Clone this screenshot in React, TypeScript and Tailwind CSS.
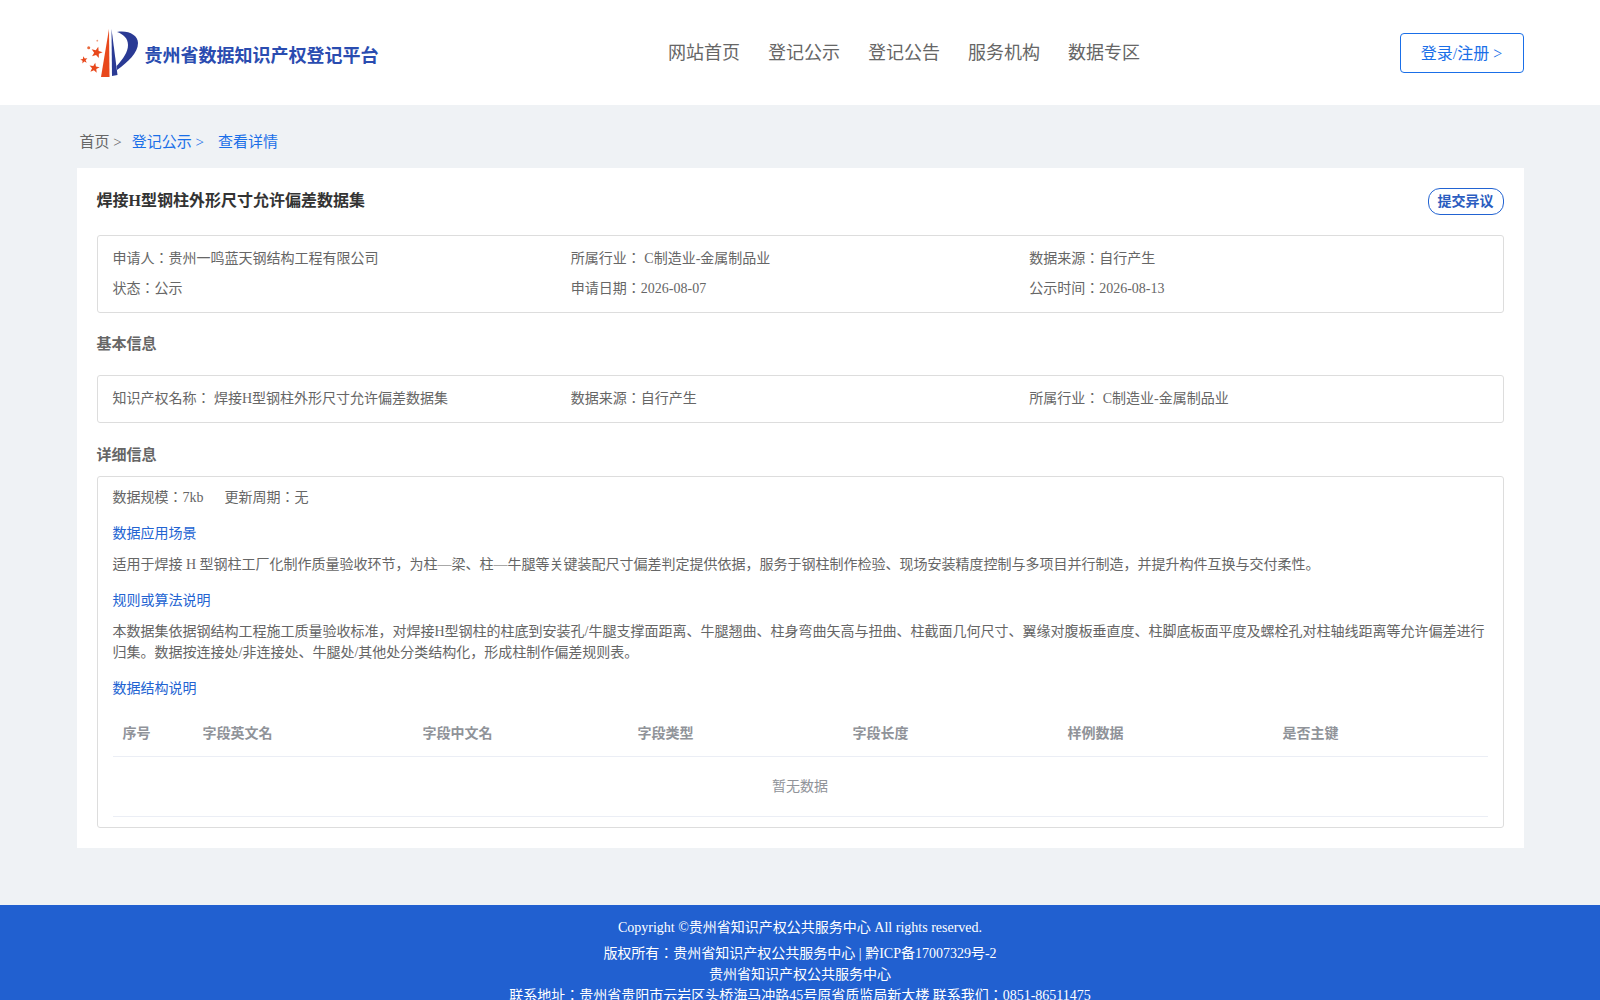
const blueLink = "text-[#1a6fe8]";

function starPoints(cx: number, cy: number, r: number, rot: number) {
  const pts: string[] = [];
  for (let i = 0; i < 10; i++) {
    const rad = i % 2 === 0 ? r : r * 0.42;
    const a = ((-90 + rot + i * 36) * Math.PI) / 180;
    pts.push(`${(cx + rad * Math.cos(a)).toFixed(2)},${(cy + rad * Math.sin(a)).toFixed(2)}`);
  }
  return pts.join(" ");
}

function Logo() {
  return (
    <svg width="62" height="54" viewBox="0 0 62 54" className="shrink-0">
      <path d="M23 51 L31 3 L31.5 51 Z" fill="#e8481c" />
      <path d="M33.5 3 L34 50 L39.5 49 Z" fill="#2a3a94" />
      <path d="M39 6 C50 4 60 9 60 17 C60 27 50 36 39 44 L38.6 40 C45 33 50 26 50 19 C50 12 45 8 39 6 Z" fill="#2a3a94" />
      <polygon points={starPoints(18.7, 26.5, 6, 15)} fill="#e8481c" />
      <polygon points={starPoints(6, 34, 3.8, -10)} fill="#e8481c" />
      <polygon points={starPoints(16.3, 42, 5.4, 10)} fill="#e8481c" />
      <circle cx="10.7" cy="21.7" r="1.5" fill="#e8693c" />
      <circle cx="19.3" cy="14.7" r="0.9" fill="#ee9a7c" />
    </svg>
  );
}

function Header() {
  return (
    <header className="h-[105px] bg-white flex justify-center">
      <div className="w-[1447px] flex items-start justify-between">
        <div className="flex items-center pl-[1px] pt-[26px]">
          <Logo />
          <span className="ml-[5px] mt-[6px] text-[18px] leading-[24px] font-bold text-[#2a4cb0]">贵州省数据知识产权登记平台</span>
        </div>
        <nav className="flex gap-[28px] pt-[40px] ml-[30px] text-[18px] leading-[26px] text-[#666666]">
          <span>网站首页</span>
          <span>登记公示</span>
          <span>登记公告</span>
          <span>服务机构</span>
          <span>数据专区</span>
        </nav>
        <div className="pt-[33px]">
          <div className={`w-[124px] h-[40px] rounded-[4px] border border-[#1a6fe8] flex items-center justify-center text-[16px] ${blueLink}`}>登录/注册 &gt;</div>
        </div>
      </div>
    </header>
  );
}

function InfoRow({ items }: { items: string[] }) {
  return (
    <div className="grid grid-cols-3">
      {items.map((t) => (
        <div key={t}>{t}</div>
      ))}
    </div>
  );
}

function SectionHead({ children }: { children: string }) {
  return <h3 className="text-[15px] leading-[20px] font-bold text-[#666666]">{children}</h3>;
}

function SubHead({ children }: { children: string }) {
  return <div className="text-[14px] leading-[21px] text-[#2263d2]">{children}</div>;
}

const cols = ["序号", "字段英文名", "字段中文名", "字段类型", "字段长度", "样例数据", "是否主键"];

function FieldTable() {
  return (
    <div className="mt-[11px]">
      <div className="grid grid-cols-[80px_220px_215px_215px_215px_215px_1fr] h-[47px] items-center border-b border-[#ebeef5] font-bold text-[#909399]">
        {cols.map((c) => (
          <div key={c} className="px-[10px]">{c}</div>
        ))}
      </div>
      <div className="h-[60px] flex items-center justify-center border-b border-[#ebeef5] text-[#909399]">暂无数据</div>
    </div>
  );
}

export default function App() {
  return (
    <div
      className="h-screen overflow-hidden bg-[#eff2f5] text-[14px] leading-[21px] text-[#666666]"
      style={{ fontFamily: '"Liberation Serif", "Noto Sans CJK JP", serif' }}
    >
      <Header />
      <main className="w-[1447px] mx-auto">
        <div className="h-[63px] flex items-center pl-[3px] pt-[11px] text-[15px]">
          <span className="text-[#666666]">首页 &gt;</span>
          <span className={`ml-[10px] ${blueLink}`}>登记公示 &gt;</span>
          <span className={`ml-[14px] ${blueLink}`}>查看详情</span>
        </div>
        <section className="bg-white px-[20px] pt-[20px] pb-[20px]">
          <div className="flex justify-between items-start h-[47px]">
            <h2 className="mt-[1px] text-[16px] leading-[24px] font-bold text-[#333333]">焊接H型钢柱外形尺寸允许偏差数据集</h2>
            <div className="w-[76px] h-[27px] rounded-[12px] border border-[#2263d2] flex items-center justify-center font-bold text-[#2a5cc0]">提交异议</div>
          </div>
          <div className="border border-[#dddddd] rounded-[3px] px-[15px] pt-[12px] h-[78px]">
            <InfoRow items={["申请人：贵州一鸣蓝天钢结构工程有限公司", "所属行业： C制造业-金属制品业", "数据来源：自行产生"]} />
            <div className="mt-[9px]">
              <InfoRow items={["状态：公示", "申请日期：2026-08-07", "公示时间：2026-08-13"]} />
            </div>
          </div>
          <div className="mt-[21px] mb-[21px]">
            <SectionHead>基本信息</SectionHead>
          </div>
          <div className="border border-[#dddddd] rounded-[3px] px-[15px] pt-[12px] h-[48px]">
            <InfoRow items={["知识产权名称： 焊接H型钢柱外形尺寸允许偏差数据集", "数据来源：自行产生", "所属行业： C制造业-金属制品业"]} />
          </div>
          <div className="mt-[22px] mb-[11px]">
            <SectionHead>详细信息</SectionHead>
          </div>
          <div className="border border-[#dddddd] rounded-[3px] px-[15px] pt-[10px] pb-[10px]">
            <div className="flex gap-[21px]">
              <span>数据规模：7kb</span>
              <span>更新周期：无</span>
            </div>
            <div className="mt-[15px]"><SubHead>数据应用场景</SubHead></div>
            <p className="mt-[10px]">适用于焊接 H 型钢柱工厂化制作质量验收环节，为柱—梁、柱—牛腿等关键装配尺寸偏差判定提供依据，服务于钢柱制作检验、现场安装精度控制与多项目并行制造，并提升构件互换与交付柔性。</p>
            <div className="mt-[15px]"><SubHead>规则或算法说明</SubHead></div>
            <p className="mt-[10px]">本数据集依据钢结构工程施工质量验收标准，对焊接H型钢柱的柱底到安装孔/牛腿支撑面距离、牛腿翘曲、柱身弯曲矢高与扭曲、柱截面几何尺寸、翼缘对腹板垂直度、柱脚底板面平度及螺栓孔对柱轴线距离等允许偏差进行归集。数据按连接处/非连接处、牛腿处/其他处分类结构化，形成柱制作偏差规则表。</p>
            <div className="mt-[15px]"><SubHead>数据结构说明</SubHead></div>
            <FieldTable />
          </div>
        </section>
      </main>
      <footer className="mt-[57px] bg-[#2160d0] text-white text-center pt-[12px] pb-[20px]">
        <div className="mb-[5px]">Copyright ©贵州省知识产权公共服务中心 All rights reserved.</div>
        <div>版权所有：贵州省知识产权公共服务中心 | 黔ICP备17007329号-2</div>
        <div>贵州省知识产权公共服务中心</div>
        <div>联系地址：贵州省贵阳市云岩区头桥海马冲路45号原省质监局新大楼 联系我们：0851-86511475</div>
      </footer>
    </div>
  );
}
